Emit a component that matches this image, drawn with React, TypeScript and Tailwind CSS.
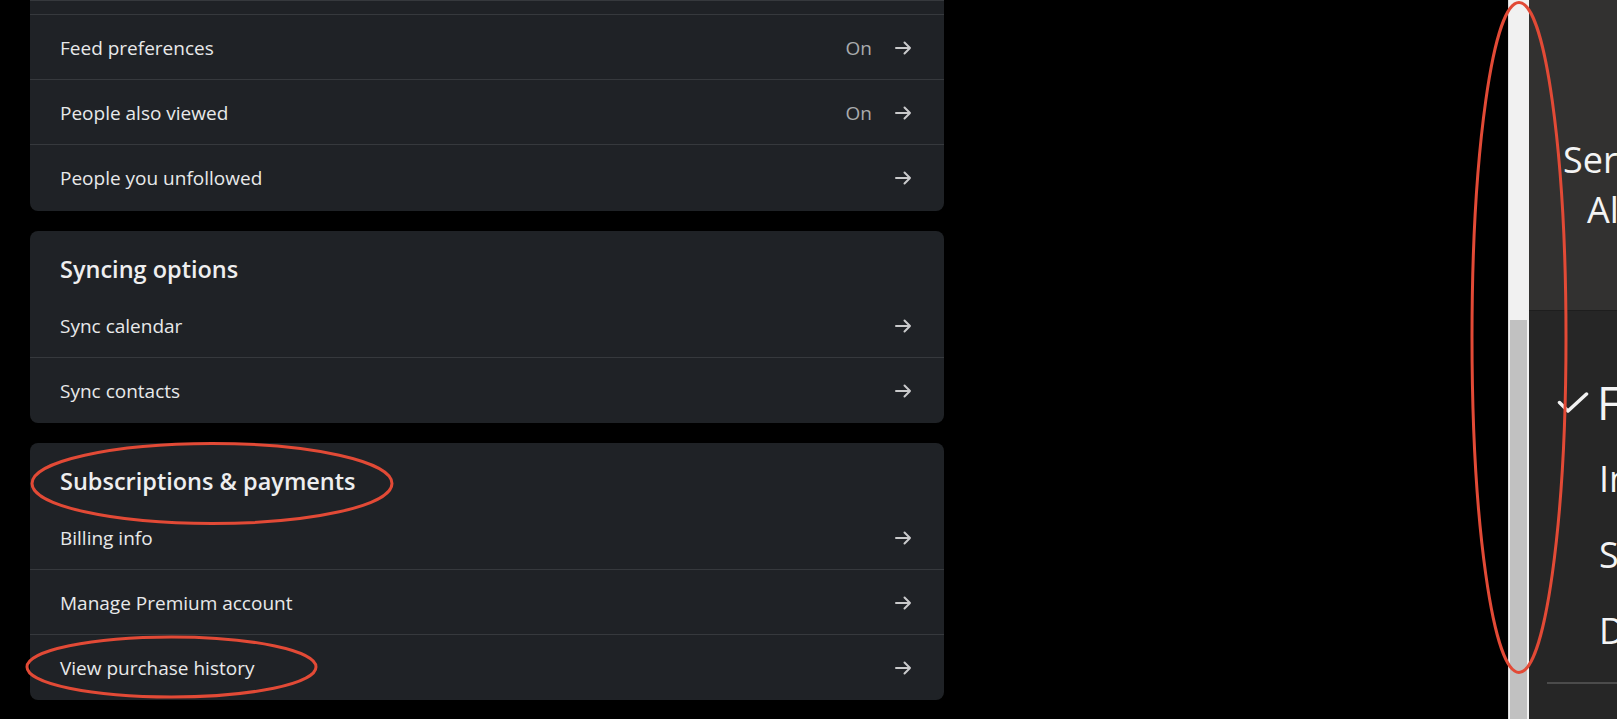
import { ReactNode } from 'react'

function Arrow() {
  return (
    <svg width="17" height="14" viewBox="0 0 17 14" fill="none" className="shrink-0">
      <path d="M1 7h14M9.5 1.5 15 7l-5.5 5.5" stroke="#c9cacb" strokeWidth="2" strokeLinecap="round" strokeLinejoin="round" />
    </svg>
  )
}

function Row({ label, value, first }: { label: string; value?: string; first?: boolean }) {
  return (
    <div
      className={
        first
          ? 'flex h-[64px] items-center justify-between pl-[30px] pr-[32px] pt-[2px]'
          : 'flex h-[65px] items-center justify-between border-t border-[#36393d] pl-[30px] pr-[32px] pt-[2px]'
      }
    >
      <span className="text-[19px] text-[#e8e9ea]">{label}</span>
      <div className="flex items-center gap-[23px]">
        {value && <span className="text-[19px] text-[#a9abad]">{value}</span>}
        <Arrow />
      </div>
    </div>
  )
}

function Card({ title, children }: { title: string; children: ReactNode }) {
  return (
    <section className="w-[914px] overflow-hidden rounded-lg bg-[#1f2226] pb-px">
      <h2 className="flex h-[62px] items-center pl-[30px] pt-[15px] text-[23.5px] font-semibold text-[#eeeeef]">
        {title}
      </h2>
      {children}
    </section>
  )
}

function Check() {
  return (
    <svg width="32" height="22" viewBox="0 0 32 22" fill="none" className="shrink-0">
      <path d="M2.5 10.5l8.5 8.5L29.5 2" stroke="#f2f2f2" strokeWidth="3.5" strokeLinecap="round" strokeLinejoin="round" />
    </svg>
  )
}

export default function App() {
  return (
    <div className="relative flex h-[719px] w-full overflow-hidden bg-black font-['Open_Sans',sans-serif]">
      {/* settings column */}
      <main className="flex w-[1508px] shrink-0 flex-col gap-5 pl-[30px]">
        <section className="w-[914px] overflow-hidden rounded-b-lg bg-[#1f2226] pb-[2px]">
          <div className="h-[15px] border-y border-[#36393d]" />
          <Row label="Feed preferences" value="On" first />
          <Row label="People also viewed" value="On" />
          <Row label="People you unfollowed" />
        </section>

        <Card title="Syncing options">
          <Row label="Sync calendar" first />
          <Row label="Sync contacts" />
        </Card>

        <Card title="Subscriptions & payments">
          <Row label="Billing info" first />
          <Row label="Manage Premium account" />
          <Row label="View purchase history" />
        </Card>
      </main>

      {/* browser scrollbar */}
      <div className="flex w-[21px] shrink-0 flex-col border-l border-[#dadada] bg-[#f1f1f1] pl-px pt-[320px]">
        <div className="w-[17px] flex-1 bg-[#c1c1c1]" />
      </div>

      {/* side window */}
      <aside className="flex min-w-0 flex-1 flex-col overflow-hidden whitespace-nowrap text-[#f4f4f4]">
        <div className="h-[310px] shrink-0 bg-[#323130] pt-[135px] text-[36px] leading-[50px]">
          <p className="pl-[34px]">Services</p>
          <p className="pl-[58px]">Always</p>
        </div>
        <div className="flex flex-1 flex-col border-t border-[#1e1e1e] bg-[#262626] pt-[54px]">
          <div className="flex h-[76px] items-center pl-[28px]">
            <Check />
            <span className="ml-[8px] text-[45px]">Featured</span>
          </div>
          <div className="flex h-[76px] items-center pl-[70px] text-[36px]">Inbox</div>
          <div className="flex h-[76px] items-center pl-[70px] text-[36px]">Sent</div>
          <div className="flex h-[76px] items-center pl-[70px] text-[36px]">Drafts</div>
          <div className="ml-[18px] mt-[13px] h-[2px] bg-[#4b4b4b]" />
        </div>
      </aside>

      {/* red annotations */}
      <svg className="pointer-events-none absolute inset-0" width="1617" height="719" fill="none">
        <ellipse cx="212" cy="483.5" rx="180" ry="40" stroke="#e24a36" strokeWidth="3" />
        <ellipse cx="171.5" cy="667" rx="144.5" ry="30" stroke="#e24a36" strokeWidth="3" />
        <ellipse cx="1519" cy="337.5" rx="47" ry="335" stroke="#e24a36" strokeWidth="3" />
      </svg>
    </div>
  )
}
